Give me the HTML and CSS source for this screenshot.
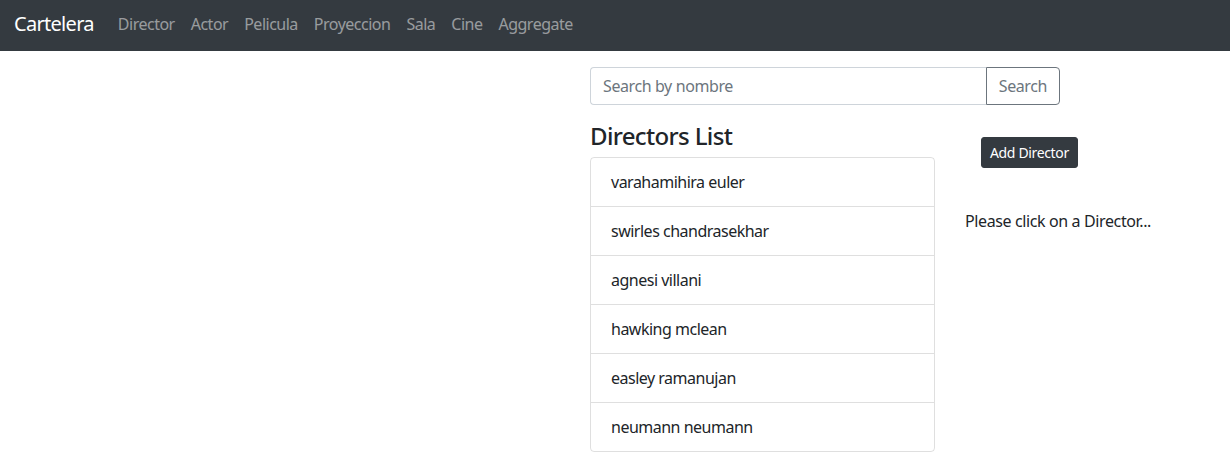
FILE: index.html
```html
<!DOCTYPE html>
<html>
<head>
<meta charset="utf-8">
<link rel="stylesheet" href="styles.css">
</head>
<body>
<nav class="navbar">
  <a class="brand" href="#">Cartelera</a>
  <div class="nav-links">
    <a class="nav-link" href="#">Director</a>
    <a class="nav-link" href="#">Actor</a>
    <a class="nav-link" href="#">Pelicula</a>
    <a class="nav-link" href="#">Proyeccion</a>
    <a class="nav-link" href="#">Sala</a>
    <a class="nav-link" href="#">Cine</a>
    <a class="nav-link" href="#">Aggregate</a>
  </div>
</nav>
<main class="page">
  <div class="list">
    <div class="search-row">
      <div class="input-group">
        <input class="search-input" type="text" placeholder="Search by nombre">
        <button class="btn-search" type="button">Search</button>
      </div>
    </div>
    <div class="cols">
      <div class="col">
        <h4 class="title">Directors List</h4>
        <ul class="list-group">
          <li class="list-item">varahamihira euler</li>
          <li class="list-item">swirles chandrasekhar</li>
          <li class="list-item">agnesi villani</li>
          <li class="list-item">hawking mclean</li>
          <li class="list-item">easley ramanujan</li>
          <li class="list-item">neumann neumann</li>
        </ul>
      </div>
      <div class="col col-right">
        <button class="btn-add" type="button">Add Director</button>
        <div class="hint">
          <br>
          <p class="hint-text">Please click on a Director...</p>
        </div>
      </div>
    </div>
  </div>
</main>
</body>
</html>
```
FILE: styles.css
```css
* { box-sizing: border-box; }
html, body { margin: 0; padding: 0; }
body {
  font-family: "Segoe UI", "Noto Sans", "Open Sans", sans-serif;
  font-size: 16px;
  line-height: 1.5;
  letter-spacing: -0.5px;
  color: #212529;
  background: #fff;
  overflow: hidden;
}
.navbar {
  display: flex;
  align-items: center;
  height: 51px;
  padding: 0 14px 4px;
  background: #343a40;
}
.brand {
  font-size: 20px;
  letter-spacing: -0.7px;
  color: #fff;
  text-decoration: none;
  margin-right: 16px;
}
.nav-links { display: flex; }
.nav-link {
  color: rgba(255,255,255,.5);
  text-decoration: none;
  padding: 0 8px;
}
.page { padding-top: 16px; padding-left: 575px; }
.list { width: 655px; }
.search-row { width: 500px; padding: 0 15px; margin-bottom: 16px; }
.input-group { display: flex; height: 38px; }
.search-input {
  flex: 1;
  min-width: 0;
  font: inherit;
  font-size: 16px;
  letter-spacing: -0.4px;
  color: #495057;
  padding: 6px 12px;
  border: 1px solid #ced4da;
  border-right: none;
  border-radius: 4px 0 0 4px;
  outline: none;
}
.search-input::placeholder { color: #6c757d; opacity: 1; }
.btn-search {
  font: inherit;
  font-size: 16px;
  letter-spacing: -0.4px;
  color: #6c757d;
  background: transparent;
  border: 1px solid #6c757d;
  border-radius: 0 4px 4px 0;
  padding: 6px 12px;
}
.cols { display: flex; }
.col { width: 375px; padding: 0 15px; }
.col-right { width: 280px; padding-right: 0; }
.title {
  font-size: 24px;
  font-weight: 500;
  line-height: 1.2;
  letter-spacing: -0.65px;
  padding-top: 1px;
  margin: 0 0 6px;
}
.list-group {
  list-style: none;
  margin: 0;
  padding: 0;
  border: 1px solid rgba(0,0,0,.125);
  border-radius: 4px;
}
.list-item {
  padding: 12px 20px;
  border-top: 1px solid rgba(0,0,0,.125);
}
.list-item:first-child { border-top: none; }
.btn-add {
  font: inherit;
  font-size: 14px;
  letter-spacing: -0.35px;
  line-height: 1.5;
  color: #fff;
  background: #343a40;
  border: 1px solid #343a40;
  border-radius: 3px;
  padding: 4px 8px;
  margin: 16px 16px 17px;
}
.hint-text { margin: 0 0 16px; letter-spacing: -0.38px; }
```
